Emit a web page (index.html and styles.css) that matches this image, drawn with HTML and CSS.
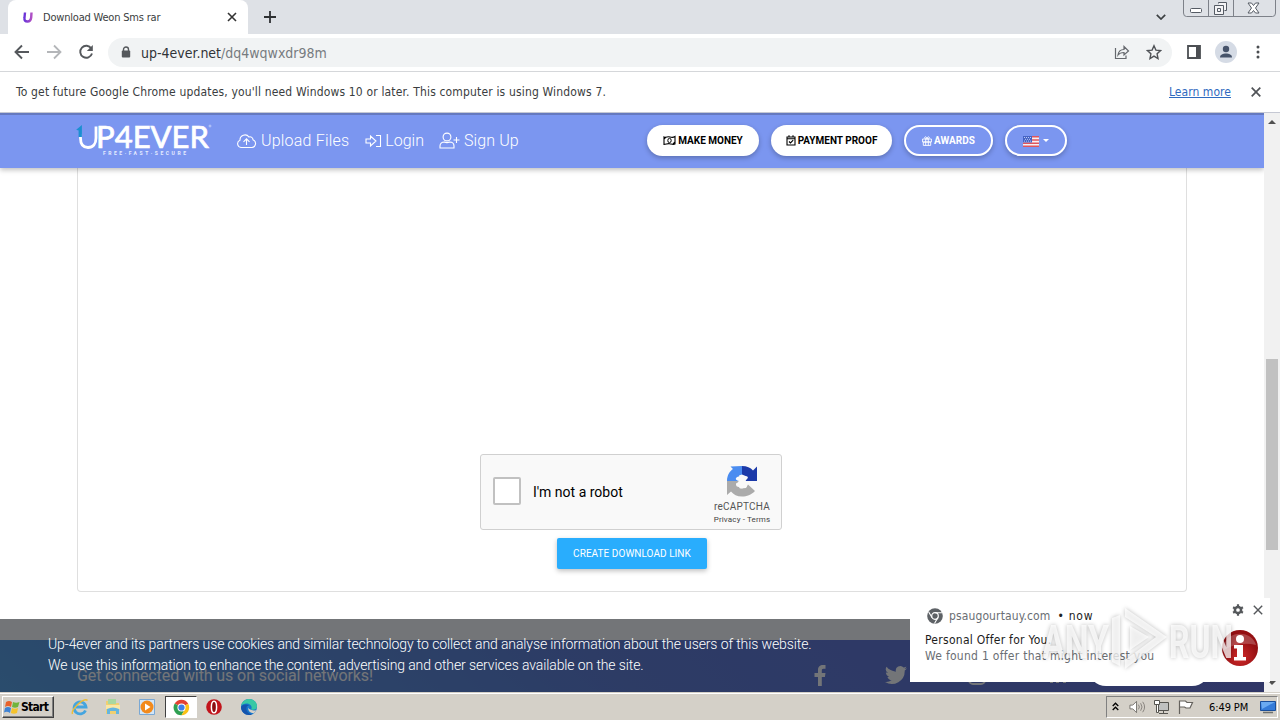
FILE: index.html
```
<!DOCTYPE html>
<html lang="en">
<head>
	<meta charset="utf-8">
	<title>Download Weon Sms rar</title>
	<link rel="stylesheet" href="styles.css">
</head>
<body>

	<div class="tabstrip">
		<div class="tab">
			<svg class="favicon" viewBox="0 0 12 12"><defs><linearGradient id="fav" x2="1"><stop offset="0" stop-color="#6a35d8"/><stop offset="1" stop-color="#b04fc4"/></linearGradient></defs><path d="M3 1.500 2.500 6.500c-.4 3 .8 4 3 4s3.300-1 3.700-4l.3-5" fill="none" stroke="url(#fav)" stroke-width="2.400"/></svg>
			<span class="tabTitle">Download Weon Sms rar</span>
			<svg class="tabClose" viewBox="0 0 10 10"><path d="M1 1l8 8M9 1l-8 8" stroke="#333" stroke-width="1.600"/></svg>
		</div>
		<svg class="newTab" viewBox="0 0 12 12"><path d="M6 0v12M0 6h12" stroke="#2e3033" stroke-width="1.800"/></svg>
		<svg class="tabSearch" viewBox="0 0 10 6"><path d="M.8.8 5 5 9.200.8" fill="none" stroke="#3c4043" stroke-width="1.700"/></svg>
		<svg class="winButtons" viewBox="0 0 93 17">
			<path d="M.5 0v13q0 3.500 3 3.500h86q3 0 3-3.500V0M25.500 0v16M50.500 0v16" fill="none" stroke="#7d8189"/>
			<rect x="7.500" y="8.500" width="11" height="4" rx="1" fill="#fff" stroke="#555b64"/>
			<path d="M35.500 3.500v-1h8v8h-2M31.500 5.500h9v9h-9zM34.500 8.500h3v3h-3z" fill="#f4f4f6" stroke="#555b64"/>
			<path d="M65 3h3.500l2 2.500L72.500 3H76l-3.500 5 3.500 5h-3.500l-2-2.500-2 2.500H65l3.500-5z" fill="#fff" stroke="#555b64"/>
		</svg>
	</div>

	<div class="toolbar">
		<svg class="navIcon" viewBox="0 0 16 16"><path d="M15 8H2M8 1.500 1.500 8 8 14.500" fill="none" stroke="#55585c" stroke-width="1.900"/></svg>
		<svg class="navIcon" viewBox="0 0 16 16"><path d="M1 8h13M8 1.500 14.500 8 8 14.500" fill="none" stroke="#b4b6b9" stroke-width="1.800"/></svg>
		<svg class="navIcon" viewBox="0 0 16 16"><path d="M13.300 4.500A6 6 0 1 0 14 9.500" fill="none" stroke="#55585c" stroke-width="1.900"/><path d="M14.800 1v6H8.800z" fill="#55585c"/></svg>
		<div class="omnibox">
			<svg class="lock" viewBox="0 0 10 12"><path d="M2.500 5V3.500a2.500 2.500 0 0 1 5 0V5" fill="none" stroke="#55585c" stroke-width="1.400"/><rect x=".8" y="4.500" width="8.400" height="7" rx="1" fill="#55585c"/></svg>
			<span class="url">up-4ever.net</span><span class="urlPath">/dq4wqwxdr98m</span>
			<svg class="share" viewBox="0 0 16 16"><path d="M1.500 4v10.500h10.500v-3M4 11c.5-4 3-5.500 6-5.500V2.500l4.500 4.500L10 11V8.500c-2.500 0-4.500.5-6 2.500z" fill="none" stroke="#65686d" stroke-width="1.200"/></svg>
			<svg class="star" viewBox="0 0 16 16"><path d="m8 1.800 1.900 4.300 4.600.5-3.400 3.200.9 4.700L8 12.100l-4 2.400.9-4.700L1.500 6.600l4.600-.5z" fill="none" stroke="#4f5256" stroke-width="1.400"/></svg>
		</div>
		<svg class="sidePanel" viewBox="0 0 14 14"><path d="M1 1h12v12H1z" fill="none" stroke="#4c4f53" stroke-width="1.800"/><path d="M9 1h4v12H9z" fill="#4c4f53"/></svg>
		<svg class="avatar" viewBox="0 0 22 22"><circle cx="11" cy="11" r="11" fill="#d5dbe5"/><circle cx="11" cy="8" r="3.200" fill="#46536a"/><path d="M5 16.500c0-3 3-4 6-4s6 1 6 4z" fill="#46536a"/></svg>
		<svg class="menuDots" viewBox="0 0 4 14"><g fill="#4a4d51"><circle cx="2" cy="2" r="1.500"/><circle cx="2" cy="7" r="1.500"/><circle cx="2" cy="12" r="1.500"/></g></svg>
	</div>

	<div class="infobar">
		<span class="infoText">To get future Google Chrome updates, you'll need Windows 10 or later. This computer is using Windows 7.</span>
		<a class="learnMore" href="#">Learn more</a>
		<svg class="infoClose" viewBox="0 0 10 10"><path d="M.7.7l8.600 8.600M9.300.7.7 9.300" stroke="#505357" stroke-width="1.700"/></svg>
	</div>

	<div class="viewport">
		<div class="page">
			<div class="header">
				<svg class="logo" viewBox="0 0 136 34">
					<path d="M4.500 10v4c0 6 2.500 9.500 7.500 9.500s8-3.500 8-9.500V2.500" fill="none" stroke="#fff" stroke-width="2.800"/>
					<path d="M2 5.500 5 3v9H3.500V6z" fill="#1b8fd1" stroke="#1b8fd1" stroke-width="1.800"/>
					<text x="20" y="24" textLength="113" lengthAdjust="spacingAndGlyphs" class="logoName">P4EVER</text>
					<text x="27" y="30.500" textLength="83" class="logoSub">FREE·FAST·SECURE</text>
					<circle cx="134" cy="2" r="1" fill="none" stroke="#dfe6ff" stroke-width=".6"/>
				</svg>
				<a class="navLink upload" href="#"><svg class="cloud" viewBox="0 0 21 16"><path d="M5 14.500h11a4 4 0 0 0 1-7.700A3 3 0 0 0 13 4a5 5 0 0 0-9 3.200A3.800 3.800 0 0 0 5 14.500zM10.500 12V6M7.500 8.800l3-3 3 3" fill="none" stroke="#fff" stroke-width="1.100"/></svg><span>Upload Files</span></a>
				<a class="navLink login" href="#"><svg class="loginIcon" viewBox="0 0 17 14"><path d="M1 5h4.500V2l5.500 5-5.500 5V9H1zM11 1.500h4.500v11H11" fill="none" stroke="#fff" stroke-width="1.100"/></svg><span>Login</span></a>
				<a class="navLink signup" href="#"><svg class="userIcon" viewBox="0 0 21 17"><circle cx="8" cy="5" r="3.900" fill="none" stroke="#fff" stroke-width="1.100"/><path d="M5.500 10C2.500 10 1 11.500 1 14v2h14v-2c0-2.500-1.500-4-4.500-4-1.500.8-3.500.8-5 0zM17.500 5v6M14.500 8h6" fill="none" stroke="#fff" stroke-width="1.100"/></svg><span>Sign Up</span></a>
				<div class="headerButtons">
					<a class="pill money" href="#"><svg viewBox="0 0 13 11"><path d="M1 2c2 1 3.500-.8 6 0s3.500.5 5-.5v7.500c-2 1-3.500 0-5.500-.3S3 9.500 1 9.500zM1 4l2-2M10 9l2-2" fill="none" stroke="#000" stroke-width="1.100"/><ellipse cx="6.500" cy="5.500" rx="1.700" ry="2.200" fill="none" stroke="#000"/></svg><span>MAKE MONEY</span></a>
					<a class="pill proof" href="#"><svg viewBox="0 0 10 11"><path d="M1 2h8v8H1zM1 3.800h8M3 .3v2M7 .3v2M3 6.500l1.500 1.500L7.200 5.200" fill="none" stroke="#000" stroke-width="1.100"/></svg><span>PAYMENT PROOF</span></a>
					<a class="pill outline awards" href="#"><svg viewBox="0 0 10 10"><path d="M.6 3h8.800v3H.6zM1.300 6h7.400v3.400H1.300zM3.700 3v6.400M6.300 3v6.400M5 3C3 3 2 2 3 1s2 1 2 2c0-1 1-3 2-2s0 2-2 2z" fill="none" stroke="#fff" stroke-width=".9"/></svg><span>AWARDS</span></a>
					<a class="pill outline lang" href="#"><svg viewBox="0 0 16 11"><path fill="#f5f1f4" d="M0 0h16v11H0z"/><path d="M0 .8h16M0 4h16M0 7.200h16M0 10.200h16" stroke="#e0555d" stroke-width="1.500"/><path fill="#4563c4" d="M0 0h9v6.500H0z"/><path d="M1 1.500h7M2 3.300h6M1 5.100h7" stroke="#dbe3ff" stroke-dasharray="1 1" stroke-width=".8"/></svg><i class="caret"></i></a>
				</div>
			</div>

			<div class="card">
				<div class="recaptcha">
					<div class="checkbox"></div>
					<span class="robot">I'm not a robot</span>
					<div class="captchaBrand">
						<svg viewBox="0 0 32 32">
							<path d="M16 1v8.500l-3 1 3 5.500H1C1 10 4 6 7 4L4.500 1.500z" fill="#4a8cf0"/>
							<path d="M16 1c5 0 8.500 1.500 11 4.500L31 1.500V16H19l3-4-6-2.500z" fill="#1c3aa9"/>
							<path d="M1 16h12l-2 3.500 3 4 6-.5 2-3.500 7 6.500C25 30 21 31.500 16 31.500c-5 0-8.500-2-11-5L1 30z" fill="#ababab"/>
							<path d="M13 11.500q2-3 4 0 5-1 4.500 2-4 3-.5 6 0 4-3.500 3-1.500 2-4-.5-4 0-3.500-3.500 2-1 3-2.500-4-1-3-3 1.500-2 3-1.500z" fill="#f9f9f9"/>
						</svg>
						<span class="captchaName">reCAPTCHA</span>
						<span class="captchaLinks">Privacy - Terms</span>
					</div>
				</div>
				<button class="createLink">CREATE DOWNLOAD LINK</button>
			</div>

			<div class="footer">
				<span class="connected">Get connected with us on social networks!</span>
				<svg class="fb" viewBox="0 0 12 21"><path d="M4 21v-9H.5V8H4V5c0-3.500 2-5 5-5h2.500v3.800H9.500C8 3.800 7.800 4.500 7.800 5.500V8h3.700l-.6 4H7.800v9z" fill="#fff"/></svg>
				<svg class="tw" viewBox="0 0 24 24"><path d="M24 4.600c-.9.400-1.800.7-2.800.8 1-.6 1.800-1.600 2.200-2.700-1 .6-2 1-3.100 1.200a4.900 4.900 0 0 0-8.400 4.500C7.700 8.100 4.100 6.100 1.700 3.100a4.900 4.900 0 0 0 1.500 6.600c-.8 0-1.600-.2-2.200-.6v.1c0 2.300 1.700 4.300 3.900 4.800-.7.200-1.500.2-2.200.1.600 2 2.400 3.400 4.600 3.400A9.900 9.900 0 0 1 0 19.500 14 14 0 0 0 21.500 7.100c1-.7 1.800-1.600 2.500-2.500z" fill="#fff"/></svg>
				<svg class="ig" viewBox="0 0 18 18"><rect x="1" y="1" width="16" height="16" rx="4" fill="none" stroke="#fff" stroke-width="2"/><circle cx="9" cy="9" r="4" fill="none" stroke="#fff" stroke-width="2"/></svg>
				<svg class="li" viewBox="0 0 18 18"><path d="M1 6h3v11H1zM7 6h3v2c2-3 7-2 7 2v7h-3v-6c0-3-4-3-4 0v6H7z" fill="#fff"/></svg>
			</div>
			<div class="cookies">
				Up-4ever and its partners use cookies and similar technology to collect and analyse information about the users of this website.<br>
				We use this information to enhance the content, advertising and other services available on the site.
			</div>
			<div class="gotIt"></div>
		</div>
		<div class="scrollbar">
			<i class="arrowUp"></i>
			<div class="thumb"></div>
			<i class="arrowDown"></i>
		</div>
	</div>

	<div class="taskbar">
		<div class="start">
			<svg viewBox="0 0 16 14"><path d="M2 2q3-2 6 0L7 7Q4 5 1 7z" fill="#e8632c"/><path d="M9 2q3 1.500 6.500 0L14 7q-3 1.500-6 0z" fill="#72b43c"/><path d="M1 8q3-2 6 0l-1 5Q3 11 0 12.500z" fill="#3f83d4"/><path d="M8 8q3 1.500 6 0l-1 5q-3 1.500-6.200 0z" fill="#f5c32c"/></svg>
			<b>Start</b>
		</div>
		<svg class="task ie" viewBox="0 0 18 18"><path d="M14.500 12.500A6 6 0 1 1 15 9H5" fill="none" stroke="#45a5df" stroke-width="2.800"/><path d="M1.500 16C-.5 12 13-1.500 16.500 2.500" fill="none" stroke="#efbd35" stroke-width="1.400"/></svg>
		<svg class="task explorer" viewBox="0 0 18 18"><path d="M2 3h5l1 2h7v11H2z" fill="#f0cf71"/><path d="M4 1h8v5H4z" fill="#a9d8a0"/><path d="M2 7h14v4H2z" fill="#f9e7a5"/><path d="M3 16v-5q6-3 12 0v5h-3v-3H6v3z" fill="#65b5df"/></svg>
		<svg class="task player" viewBox="0 0 18 18"><path d="M1.500 1.500h15v15h-15z" fill="#d2e6f8" stroke="#7aa8d4"/><circle cx="9" cy="9" r="6.500" fill="#f28a1c"/><path d="M7 5.500 12.500 9 7 12.500z" fill="#fff"/></svg>
		<div class="activeTask">
			<svg viewBox="0 0 18 18"><path d="M9 9 1.800 4.800A8.200 8.200 0 0 1 16.100 5z" fill="#e34133"/><path d="M9 9 1.800 4.800A8.200 8.200 0 0 0 9 17.200l4-7z" fill="#2fa052"/><path d="M9 9l7.100-4A8.200 8.200 0 0 1 9 17.200l3.500-6z" fill="#fbc116"/><circle cx="9" cy="9" r="4.300" fill="#fff"/><circle cx="9" cy="9" r="3.300" fill="#3f7fe8"/></svg>
		</div>
		<svg class="task opera" viewBox="0 0 18 18"><circle cx="9" cy="9" r="7.800" fill="#c2141b"/><ellipse cx="9" cy="9" rx="2.600" ry="5.800" fill="#8c0c10" stroke="#fff" stroke-width="1.500"/></svg>
		<svg class="task edge" viewBox="0 0 18 18"><circle cx="9" cy="9" r="8" fill="#1676cb"/><path d="M1.200 8C2 3 6 1 9 1c5 0 8 3.500 8 7s-3 4.500-6 3.500c2-3-1-6-4.500-6C4 5.500 2 6.500 1.200 8z" fill="#39c8a5"/><path d="M7 8c-2 4 1 8 5 8.400C7 18.500 1 15 1 9c2-3 6-3 8-1.500z" fill="#1554ad"/><path d="M9 8c-2 2 1 5.500 7.500 4.200-1 1.500-2 2.500-3 3C9 15 7 11 9 8z" fill="#d4d0c8"/></svg>
		<div class="tray">
			<svg class="trayUp" viewBox="0 0 7 9"><path d="M.7 4 3.500 1.200 6.300 4M.7 8l2.800-2.800L6.300 8" fill="none" stroke="#000" stroke-width="1.300"/></svg>
			<svg class="sound" viewBox="0 0 18 14"><path d="M1 5h3l4-4v12L4 9H1z" fill="#fff" stroke="#73706a"/><path d="M10 4.500q2 2.500 0 5M12.300 3q3 4 0 8M14.500 1.500q4 5.500 0 11" fill="none" stroke="#85817b"/></svg>
			<svg class="network" viewBox="0 0 17 16"><path d="M4.500 3.500h11v8h-11z" fill="#bfc1c0" stroke="#55544f"/><path d="M6 14.500h9M10.500 12v2" stroke="#55544f"/><path d="M1.500 1.500h5v4h-5zM3.500 5.500h2v8h-2z" fill="#fff" stroke="#55544f"/></svg>
			<svg class="flag" viewBox="0 0 17 16"><path d="M2.500 15V1.500M2.500 2h6l1.500 1.500h5.500L13 9H9L7.500 8h-5" fill="#fff" stroke="#65625d" stroke-width="1.200"/></svg>
			<span class="clock">6:49 PM</span>
			<svg class="desktop" viewBox="0 0 16 14"><path d="M.5 1.500h15v9H.5z" fill="#347bd8" stroke="#194e9a"/><path d="M1 2h14l-13 7z" fill="#6aaaf1"/><path d="M3 12.500h10" stroke="#6f716f" stroke-width="1.500"/></svg>
		</div>
	</div>

	<!-- desktop notification -->
	<div class="toast">
		<div class="toastBody">
			<div class="toastSource">
				<svg viewBox="0 0 16 16"><circle cx="8" cy="8" r="7.800" fill="#5e6266"/><circle cx="8" cy="8" r="3.300" fill="none" stroke="#fff" stroke-width="1.200"/><path d="M8 4.700h7M5.100 9.600 1.700 4M10.900 9.600 7.500 15.500" stroke="#fff" stroke-width="1.100"/></svg>
				<span class="site">psaugourtauy.com</span><span class="bullet">•</span><span class="when">now</span>
			</div>
			<div class="toastTitle">Personal Offer for You.</div>
			<div class="toastText">We found 1 offer that might interest you</div>
		</div>
		<div class="toastSide">
			<div class="toastTools">
				<svg class="gear" viewBox="0 0 12 12"><circle cx="6" cy="6" r="3.100" fill="none" stroke="#55585b" stroke-width="2.500"/><path d="M6 .3v2M6 9.700v2M1.100 3.200l1.700 1M9.200 7.800l1.700 1M1.100 8.800l1.700-1M9.200 4.200l1.700-1" stroke="#55585b" stroke-width="2.200"/></svg>
				<svg class="toastClose" viewBox="0 0 10 10"><path d="M.8.8l8.400 8.400M9.200.8.8 9.200" stroke="#55585b" stroke-width="1.400"/></svg>
			</div>
			<svg class="infoIcon" viewBox="0 0 38 38"><defs><radialGradient id="ball" cy=".75"><stop offset="0" stop-color="#d02a2a"/><stop offset="1" stop-color="#940f12"/></radialGradient></defs><circle cx="19" cy="19" r="18" fill="url(#ball)"/><path d="M3 16a16.500 15 0 0 1 32 0Q18 12 3 21z" fill="#fff" opacity=".22"/><circle cx="19" cy="10" r="4" fill="#fff"/><path d="M13 16h9v12h3v3.500H13V28h3v-8.500h-3z" fill="#fff"/></svg>
		</div>
	</div>

	<svg class="watermark" viewBox="0 0 200 70">
		<text x="4" y="54" textLength="67" lengthAdjust="spacingAndGlyphs">ANY</text>
		<path d="M74 14v44l8 4V11zM87 4l42 29-42 32v-9l31-23-31-20z"/>
		<path d="M92 22v24l19-13z"/>
		<text x="131" y="54" textLength="64" lengthAdjust="spacingAndGlyphs">RUN</text>
	</svg>

</body>
</html>
```
FILE: styles.css
```
		* {
			box-sizing: border-box;
		}

		body {
			margin: 0;
			width: 1280px;
			height: 720px;
			overflow: hidden;
			position: relative;
			background-color: white;
			font-family: "DejaVu Sans Condensed", "DejaVu Sans", sans-serif;
			font-stretch: condensed;
			font-size: 12px;
			color: #3a3d40;
		}

		svg {
			display: block;
			flex: none;
		}

		span, a, b {
			white-space: nowrap;
		}

		.tabstrip {
			display: flex;
			height: 34px;
			padding-left: 8px;
			background-color: #dee1e6;
		}

		.tab {
			display: flex;
			align-items: center;
			width: 240px;
			height: 34px;
			padding: 0 11px 0 14px;
			background-color: white;
			border-radius: 8px 8px 0 0;
		}

		.favicon {
			width: 12px;
			height: 12px;
		}

		.tabTitle {
			margin-left: 9px;
			font-size: 11px;
			letter-spacing: -0.2px;
		}

		.tabClose {
			width: 10px;
			height: 10px;
			margin-left: auto;
		}

		.newTab {
			width: 12px;
			height: 12px;
			margin: 11px 0 0 16px;
		}

		.tabSearch {
			width: 10px;
			height: 6px;
			margin: 14px 17px 0 auto;
		}

		.winButtons {
			width: 93px;
			height: 17px;
			margin: 0 4px 0 0;
		}

		.toolbar {
			display: flex;
			align-items: center;
			height: 38px;
			padding-left: 14px;
			border-bottom: 1px solid #d5d7da;
		}

		.navIcon {
			width: 16px;
			height: 16px;
			margin: -2px 16px 0 0;
		}

		.omnibox {
			display: flex;
			align-items: center;
			width: 1064px;
			height: 29px;
			margin-left: -2px;
			padding: 0 10px 0 13px;
			background-color: #f1f3f4;
			border-radius: 15px;
		}

		.lock {
			width: 10px;
			height: 12px;
			margin: -2px 10px 0 0;
		}

		.url, .urlPath {
			font-size: 14px;
			color: #303338;
		}

		.urlPath {
			color: #777b80;
		}

		.share {
			width: 16px;
			height: 16px;
			margin: -2px 16px 0 auto;
		}

		.star {
			width: 16px;
			height: 16px;
			margin-top: -2px;
		}

		.sidePanel {
			width: 14px;
			height: 14px;
			margin: -2px 0 0 15px;
		}

		.avatar {
			width: 22px;
			height: 22px;
			margin: -2px 0 0 14px;
		}

		.menuDots {
			width: 4px;
			height: 14px;
			margin: -2px 0 0 19px;
		}

		.infobar {
			display: flex;
			align-items: center;
			height: 41px;
			padding: 0 19px 1px 16px;
			border-bottom: 1px solid #c5c8d3;
			font-size: 12px;
		}

		.infoText {
			letter-spacing: 0.16px;
		}

		.learnMore {
			margin: 0 20px 0 auto;
			color: #2f6ac0;
			letter-spacing: 0.05px;
		}

		.infoClose {
			width: 10px;
			height: 10px;
		}

		.viewport {
			display: flex;
			height: 579px;
		}

		.page {
			position: relative;
			width: 1264px;
			overflow: hidden;
			font-family: Roboto, sans-serif;
			font-stretch: normal;
		}

		.header {
			position: relative;
			display: flex;
			align-items: center;
			height: 55px;
			padding: 0 0 2px 76px;
			background-color: #7b96f0;
			border-top: 2px solid #6579bf;
			box-shadow: 0 2px 5px rgba(0, 0, 0, 0.25);
		}

		.logo {
			width: 136px;
			height: 34px;
			overflow: visible;
		}

		.logoName {
			font: 400 30px Lato, sans-serif;
			fill: white;
			stroke: white;
			stroke-width: 0.7px;
		}

		.logoSub {
			font: 700 5px Roboto, sans-serif;
			fill: #e6ecff;
		}

		.navLink {
			display: flex;
			align-items: center;
			color: white;
			font-size: 16px;
			font-weight: 300;
			text-decoration: none;
		}

		.upload {
			margin-left: 24px;
			letter-spacing: 0.2px;
		}

		.login {
			margin-left: 16px;
		}

		.signup {
			margin-left: 15px;
			letter-spacing: 0.1px;
		}

		.cloud {
			width: 21px;
			height: 16px;
			margin-right: 4px;
		}

		.loginIcon {
			width: 17px;
			height: 14px;
			margin-right: 3px;
		}

		.userIcon {
			width: 21px;
			height: 17px;
			margin-right: 4px;
		}

		.headerButtons {
			display: flex;
			gap: 12px;
			margin: 0 197px 0 auto;
		}

		.pill {
			display: flex;
			align-items: center;
			justify-content: center;
			gap: 2px;
			height: 31px;
			border-radius: 16px;
			background-color: white;
			color: black;
			font-size: 10px;
			font-weight: 700;
			text-decoration: none;
			box-shadow: 0 2px 5px rgba(0, 0, 0, 0.25);
		}

		.outline {
			background-color: transparent;
			border: 2px solid white;
			color: white;
		}

		.money {
			width: 112px;
		}

		.money svg {
			width: 13px;
			height: 11px;
		}

		.proof {
			width: 121px;
		}

		.proof svg {
			width: 10px;
			height: 11px;
		}

		.awards {
			width: 89px;
		}

		.awards svg {
			width: 10px;
			height: 10px;
		}

		.lang {
			width: 62px;
			gap: 4px;
		}

		.lang svg {
			width: 16px;
			height: 11px;
			margin-top: 2px;
		}

		.caret {
			border: 3px solid transparent;
			border-top-color: white;
			border-bottom: 0;
		}

		.card {
			display: flex;
			flex-direction: column;
			align-items: center;
			height: 424px;
			margin: 0 77px;
			padding-top: 286px;
			border: 1px solid #dfdfdf;
			border-top: 0;
			border-radius: 0 0 4px 4px;
		}

		.recaptcha {
			display: flex;
			align-items: center;
			width: 302px;
			height: 76px;
			margin-right: 2px;
			padding: 0 10px 0 12px;
			background-color: #f9f9f9;
			border: 1px solid #d0d0d0;
			border-radius: 3px;
		}

		.checkbox {
			width: 28px;
			height: 28px;
			margin-bottom: 2px;
			background-color: white;
			border: 2px solid #c1c1c1;
			border-radius: 2px;
		}

		.robot {
			margin-left: 12px;
			font-size: 14px;
			color: black;
		}

		.captchaBrand {
			display: flex;
			flex-direction: column;
			align-items: center;
			width: 58px;
			margin-left: auto;
			padding-top: 5px;
		}

		.captchaBrand svg {
			width: 32px;
			height: 32px;
		}

		.captchaName {
			margin-top: 4px;
			font-size: 10px;
			line-height: 12px;
			letter-spacing: 0.2px;
			color: #555;
		}

		.captchaLinks {
			margin-top: 1px;
			font-size: 8px;
			line-height: 11px;
			letter-spacing: 0.15px;
			color: #444;
		}

		.createLink {
			width: 150px;
			height: 31px;
			margin-top: 8px;
			padding: 0;
			background-color: #29adfd;
			border: 0;
			border-radius: 2px;
			color: white;
			font-family: Roboto, sans-serif;
			font-size: 10px;
			letter-spacing: 0.05px;
			white-space: nowrap;
			box-shadow: 0 2px 5px rgba(0, 0, 0, 0.25);
		}

		.footer {
			display: flex;
			height: 52px;
			margin-top: 48px;
			padding-left: 77px;
			background: linear-gradient(40deg, #3a90e0, #4164cc 48%, #4a54d0);
			color: white;
		}

		.connected {
			width: 736px;
			margin-top: 26px;
			font-size: 16px;
			line-height: 20px;
			letter-spacing: -0.1px;
		}

		.fb {
			width: 14px;
			height: 21px;
			margin-top: 25px;
		}

		.tw {
			width: 22px;
			height: 22px;
			margin: 24px 0 0 58px;
		}

		.ig {
			width: 18px;
			height: 18px;
			margin: 27px 0 0 61px;
		}

		.li {
			width: 18px;
			height: 18px;
			margin: 26px 0 0 63px;
		}

		/* sits over the footer */
		.cookies {
			position: absolute;
			left: 0;
			bottom: 0;
			width: 1264px;
			height: 73px;
			padding: 15px 48px 0;
			background-color: rgba(33, 37, 41, 0.63);
			color: white;
			font-size: 14px;
			font-weight: 300;
			line-height: 21px;
			letter-spacing: -0.11px;
		}

		.gotIt {
			position: absolute;
			left: 1088px;
			bottom: 6px;
			width: 122px;
			height: 36px;
			border-radius: 18px;
			background-color: white;
		}

		.scrollbar {
			display: flex;
			flex-direction: column;
			align-items: center;
			width: 16px;
			padding: 7px 0 7px;
			background-color: #f1f1f1;
		}

		.arrowUp, .arrowDown {
			border: 4px solid transparent;
			border-top: 0;
			border-bottom-color: #505050;
		}

		.arrowDown {
			margin-top: auto;
			border-top: 4px solid #505050;
			border-bottom: 0;
		}

		.thumb {
			width: 12px;
			height: 191px;
			margin-top: 235px;
			background-color: #c1c1c1;
		}

		.taskbar {
			display: flex;
			align-items: center;
			height: 28px;
			padding: 1px 2px 0;
			background-color: #d4d0c8;
			border-top: 1px solid #d4d0c8;
			box-shadow: inset 0 1px white;
		}

		.start {
			display: flex;
			align-items: center;
			width: 52px;
			height: 22px;
			padding-left: 1px;
			border: 1px solid;
			border-color: white #404040 #404040 white;
			box-shadow: inset -1px -1px #808080;
			color: black;
		}

		.start svg {
			width: 16px;
			height: 14px;
		}

		.start b {
			margin-left: 1px;
			font-size: 12px;
			letter-spacing: -0.7px;
		}

		.task {
			width: 18px;
			height: 18px;
		}

		.ie {
			margin-left: 17px;
		}

		.explorer {
			margin-left: 15px;
		}

		.player {
			margin-left: 16px;
		}

		.activeTask {
			display: flex;
			align-items: center;
			justify-content: center;
			width: 32px;
			height: 22px;
			margin-left: 9px;
			background-color: white;
			border: 1px solid;
			border-color: #404040 white white #404040;
		}

		.activeTask svg {
			width: 17px;
			height: 17px;
		}

		.opera {
			margin-left: 8px;
		}

		.edge {
			margin-left: 17px;
		}

		.tray {
			display: flex;
			align-items: center;
			width: 172px;
			height: 22px;
			margin-left: auto;
			padding-left: 5px;
			border: 1px solid;
			border-color: #808080 white white #808080;
			color: black;
		}

		.trayUp {
			width: 7px;
			height: 9px;
			margin-top: -2px;
		}

		.sound {
			width: 17px;
			height: 14px;
			margin-left: 10px;
		}

		.network {
			width: 17px;
			height: 16px;
			margin-left: 7px;
		}

		.flag {
			width: 17px;
			height: 16px;
			margin-left: 7px;
		}

		.clock {
			width: 40px;
			margin-left: 15px;
			font-size: 11px;
			letter-spacing: -0.1px;
		}

		.desktop {
			width: 16px;
			height: 14px;
			margin-left: 11px;
		}

		.toast {
			position: absolute;
			left: 910px;
			top: 598px;
			display: flex;
			justify-content: space-between;
			width: 360px;
			height: 84px;
			padding: 7px 7px 0 15px;
			background-color: white;
		}

		.toastSource {
			display: flex;
			align-items: center;
			height: 22px;
			padding-left: 2px;
			color: #6a6e73;
		}

		.toastSource svg {
			width: 16px;
			height: 16px;
			margin-right: 6px;
		}

		.site {
			letter-spacing: 0.12px;
		}

		.bullet {
			margin: 0 5px 0 7px;
			color: #222;
		}

		.when {
			color: #222;
			letter-spacing: 0.7px;
		}

		.toastTitle {
			margin-top: 5px;
			line-height: 16px;
			letter-spacing: 0.28px;
			color: #1c1c1c;
		}

		.toastText {
			line-height: 16px;
			letter-spacing: 0.28px;
			color: #6a6e73;
		}

		.toastSide {
			width: 42px;
		}

		.toastTools {
			display: flex;
			justify-content: flex-end;
			gap: 9px;
			width: 42px;
		}

		.gear {
			width: 12px;
			height: 12px;
			margin-top: -1px;
		}

		.toastClose {
			width: 10px;
			height: 10px;
		}

		.infoIcon {
			width: 38px;
			height: 38px;
			margin-top: 13px;
		}

		.watermark {
			position: absolute;
			left: 1038px;
			top: 604px;
			width: 200px;
			height: 70px;
			overflow: visible;
			fill: white;
			fill-opacity: 0.75;
			filter: drop-shadow(0 0 2px rgba(0, 0, 0, 0.35));
			font: 700 47px Roboto, sans-serif;
		}
```
